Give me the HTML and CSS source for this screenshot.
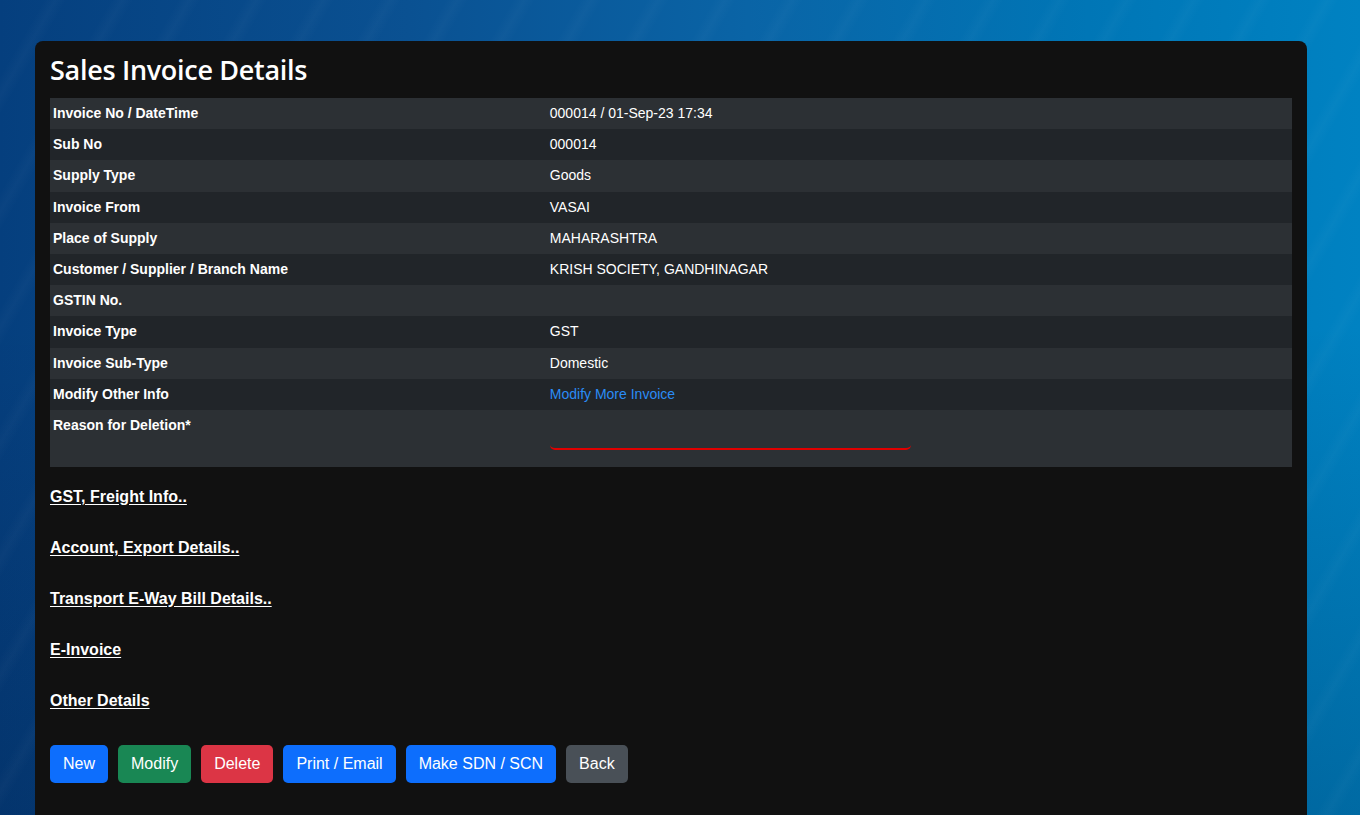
FILE: index.html
```html
<!DOCTYPE html>
<html lang="en">
<head>
<meta charset="utf-8">
<title>Sales Invoice Details</title>
<link rel="stylesheet" href="styles.css">
</head>
<body>
<div class="page">
  <div class="card">
    <h3 class="title">Sales Invoice Details</h3>
    <table class="details">
      <colgroup><col class="col-label"><col class="col-value"></colgroup>
      <tbody>
        <tr><th>Invoice No / DateTime</th><td>000014 / 01-Sep-23 17:34</td></tr>
        <tr><th>Sub No</th><td>000014</td></tr>
        <tr><th>Supply Type</th><td>Goods</td></tr>
        <tr><th>Invoice From</th><td>VASAI</td></tr>
        <tr><th>Place of Supply</th><td>MAHARASHTRA</td></tr>
        <tr><th>Customer / Supplier / Branch Name</th><td>KRISH SOCIETY, GANDHINAGAR</td></tr>
        <tr><th>GSTIN No.</th><td></td></tr>
        <tr><th>Invoice Type</th><td>GST</td></tr>
        <tr><th>Invoice Sub-Type</th><td>Domestic</td></tr>
        <tr><th>Modify Other Info</th><td><a class="blue-link" href="#">Modify More Invoice</a></td></tr>
        <tr class="reason-row"><th>Reason for Deletion*</th><td><input class="reason-input" type="text"></td></tr>
      </tbody>
    </table>
    <div class="sections">
      <a class="section-link" href="#">GST, Freight Info..</a>
      <a class="section-link" href="#">Account, Export Details..</a>
      <a class="section-link" href="#">Transport E-Way Bill Details..</a>
      <a class="section-link" href="#">E-Invoice</a>
      <a class="section-link" href="#">Other Details</a>
    </div>
    <div class="actions">
      <button class="btn btn-blue">New</button>
      <button class="btn btn-green">Modify</button>
      <button class="btn btn-red">Delete</button>
      <button class="btn btn-blue">Print / Email</button>
      <button class="btn btn-blue">Make SDN / SCN</button>
      <button class="btn btn-gray">Back</button>
    </div>
  </div>
</div>
</body>
</html>
```
FILE: styles.css
```css
html, body {
  margin: 0;
  padding: 0;
  height: 100%;
}
body {
  font-family: "Liberation Sans", Arial, sans-serif;
  color: #fff;
  overflow: hidden;
  background:
    repeating-linear-gradient(120deg, rgba(255,255,255,0) 0px, rgba(255,255,255,0) 38px, rgba(255,255,255,0.022) 48px, rgba(255,255,255,0) 58px),
    linear-gradient(180deg, rgba(0,0,0,0) 40%, rgba(0,10,40,0.2) 100%),
    linear-gradient(90deg, #053f7e 0%, #0a5192 30%, #0a64a6 55%, #0076b6 80%, #0082c2 100%);
}
.page {
  padding: 41px 53px 0 35px;
  height: 100%;
  box-sizing: border-box;
}
.card {
  background: #111111;
  border-radius: 8px 8px 0 0;
  padding: 13px 15px 30px 15px;
  min-height: 100%;
  box-sizing: border-box;
}
.title {
  margin: 0 0 12px 0;
  font-family: "Open Sans", "Noto Sans", sans-serif;
  font-weight: 600;
  font-size: 27px;
  line-height: 32px;
  letter-spacing: -0.3px;
  color: #fff;
}
.details {
  width: 100%;
  border-collapse: collapse;
  font-size: 14px;
}
.col-label { width: 40%; }
.details th, .details td {
  padding: 6px 3px;
  line-height: 19.2px;
  text-align: left;
  vertical-align: top;
}
.details th { font-weight: bold; }
.details td { font-weight: normal; }
.details tr:nth-child(odd) { background: #2c3034; }
.details tr:nth-child(even) { background: #212529; }
.blue-link {
  color: #2a8cf5;
  text-decoration: none;
}
.reason-row th, .reason-row td { height: 44.8px; }
.reason-input {
  display: block;
  width: 361px;
  height: 34px;
  margin-top: 0;
  box-sizing: border-box;
  background: transparent;
  border: none;
  border-bottom: 2px solid #e00000;
  border-radius: 0 0 5px 5px;
  outline: none;
  color: #fff;
  font-size: 14px;
}
.sections {
  display: flex;
  flex-direction: column;
  align-items: flex-start;
  gap: 33px;
  padding-top: 21px;
}
.section-link {
  color: #fff;
  font-weight: bold;
  font-size: 16px;
  line-height: 18px;
  text-decoration: underline;
  text-underline-offset: 2px;
}
.actions {
  display: flex;
  gap: 10px;
  margin-top: 35px;
}
.btn {
  font-family: "Liberation Sans", Arial, sans-serif;
  font-size: 16px;
  line-height: 24px;
  padding: 6px 12px;
  border: 1px solid transparent;
  border-radius: 5px;
  color: #fff;
  cursor: pointer;
}
.btn-blue { background: #0d6efd; }
.btn-green { background: #198754; }
.btn-red { background: #dc3545; }
.btn-gray { background: #495057; }
```
